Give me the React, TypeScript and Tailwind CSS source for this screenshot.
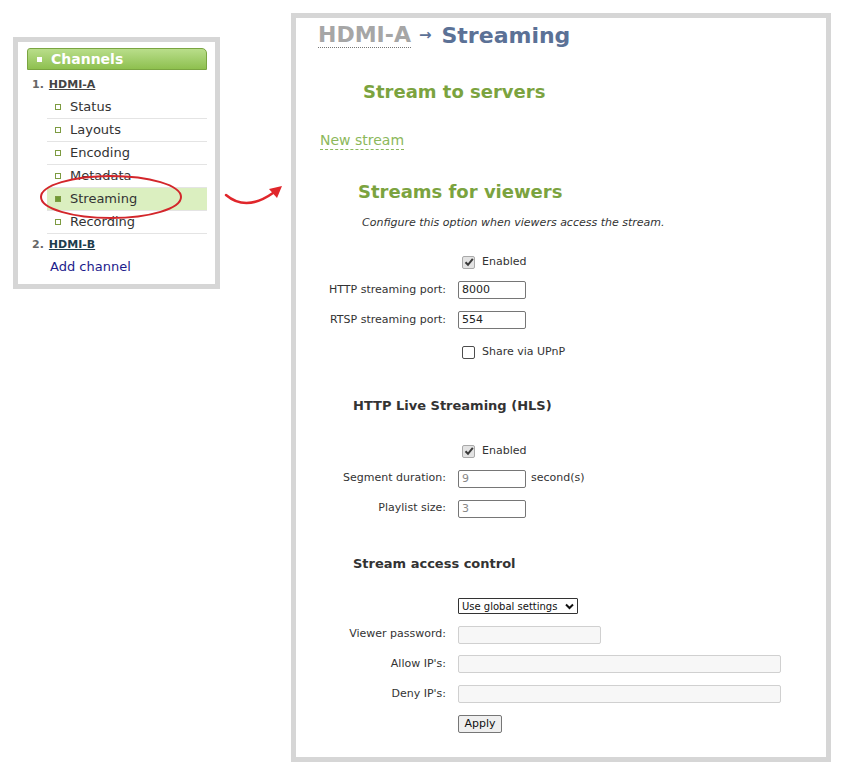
import React from 'react';

const font = { fontFamily: '"DejaVu Sans", Verdana, sans-serif' };

const channelItems = ['Status', 'Layouts', 'Encoding', 'Metadata', 'Streaming', 'Recording'];

const CheckBox: React.FC<{ checked?: boolean }> = ({ checked }) =>
  checked ? (
    <span className="ml-[4px] w-[13px] h-[13px] rounded-[2px] border border-[#a9a9a9] bg-[#e3e3e3] flex items-center justify-center">
      <svg width="10" height="10" viewBox="0 0 10 10">
        <path d="M1.5 5.2 L4 7.8 L8.8 1.8" fill="none" stroke="#3a3a3a" strokeWidth="2" />
      </svg>
    </span>
  ) : (
    <span className="ml-[4px] w-[13px] h-[13px] rounded-[2px] border border-[#4d4d4d] bg-white" />
  );

const Row: React.FC<{ label?: string; h: string; children: React.ReactNode }> = ({ label, h, children }) => (
  <div className={`flex items-center ${h}`}>
    <div className="w-[162px] pr-[12px] text-right text-[11px] text-[#333]">{label}</div>
    <div className="flex items-center">{children}</div>
  </div>
);

const TextBox: React.FC<{ value?: string; muted?: boolean; w: string; disabled?: boolean }> = ({ value, muted, w, disabled }) => (
  <div
    className={`${w} h-[18px] rounded-[2px] border px-[3px] text-[11px] leading-[16px] ${
      disabled ? 'border-[#d0d0d0] bg-[#f7f7f7]' : 'border-[#767676] bg-white'
    } ${muted ? 'text-[#888]' : 'text-[#222]'}`}
  >
    {value}
  </div>
);

export default function App() {
  return (
    <div className="bg-white w-[845px] h-[777px] flex items-start pl-[13px] pt-[13px]" style={font}>
      {/* channel sidebar */}
      <div className="relative mt-[24px] w-[207px] border-[5px] border-[#d6d6d6] bg-white pt-[6px] pl-[9px] pr-[8px] pb-[6px]">
        <div className="h-[22px] flex items-center rounded-tl-[3px] rounded-tr-[5px] border border-[#7aa541] bg-gradient-to-b from-[#b9de8a] to-[#8ec04e] pl-[9px]">
          <span className="w-[5px] h-[5px] bg-white" />
          <span className="ml-[9px] text-[14px] font-bold text-white">Channels</span>
        </div>
        <div className="h-[26px] pt-[4px] flex items-center pl-[5px] text-[11px] font-bold">
          <span className="text-[#666]">1.</span>
          <span className="ml-[5px] text-[#444] underline">HDMI-A</span>
        </div>
        <div className="ml-[20px]">
          {channelItems.map((item) => {
            const active = item === 'Streaming';
            return (
              <div
                key={item}
                className={`h-[23px] flex items-center border-b border-[#e4e4e4] ${active ? 'bg-[#dbefc0]' : ''}`}
              >
                <span
                  className={`ml-[8px] w-[6px] h-[6px] border border-[#7d9b41] ${active ? 'bg-[#6f9a35]' : 'bg-white'}`}
                />
                <span className="ml-[9px] text-[13px] text-[#333]">{item}</span>
              </div>
            );
          })}
        </div>
        <div className="h-[22px] flex items-center pl-[5px] text-[11px] font-bold">
          <span className="text-[#666]">2.</span>
          <span className="ml-[5px] text-[#1d3d4d] underline">HDMI-B</span>
        </div>
        <div className="h-[22px] flex items-center pl-[23px] text-[13px] text-[#1c1c8c]">Add channel</div>
        <svg className="absolute left-0 top-0 overflow-visible pointer-events-none" width="207" height="252">
          <ellipse cx="93" cy="155" rx="70" ry="21" fill="none" stroke="#d3262b" strokeWidth="2" />
        </svg>
      </div>

      {/* pointer arrow */}
      <svg className="mt-[167px]" width="71" height="30" viewBox="0 0 71 30">
        <path d="M6 15 Q 26 32 53 13" fill="none" stroke="#e0262b" strokeWidth="2.5" strokeLinecap="round" />
        <polygon points="62,6 49,9 57,18" fill="#e0262b" />
      </svg>

      {/* streaming page */}
      <div className="w-[540px] h-[749px] border-[5px] border-[#d6d6d6] bg-white">
        <div className="mt-[3px] ml-[22px] h-[28px] flex items-center text-[22px] font-bold">
          <span className="text-[#a6a6a6] border-b border-dotted border-[#777] leading-[24px]">HDMI-A</span>
          <span className="ml-[8px] mr-[10px] text-[15px] text-[#5b7196]">→</span>
          <span className="text-[#5b7196]">Streaming</span>
        </div>

        <div className="mt-[31px] ml-[67px] text-[18px] leading-[24px] font-bold text-[#7ba33f]">Stream to servers</div>

        <div className="mt-[27px] ml-[24px] h-[20px] flex items-center">
          <span className="text-[14px] leading-[17px] text-[#8cb85b] border-b border-dashed border-[#8cb85b]">New stream</span>
        </div>

        <div className="mt-[29px] ml-[62px] text-[18px] leading-[24px] font-bold text-[#7ba33f]">Streams for viewers</div>
        <div className="mt-[11px] ml-[66px] text-[11px] leading-[16px] italic text-[#333]">
          Configure this option when viewers access the stream.
        </div>

        <div className="mt-[17px]">
          <Row h="h-[28px]">
            <CheckBox checked />
            <span className="ml-[7px] text-[11px] text-[#333]">Enabled</span>
          </Row>
          <Row label="HTTP streaming port:" h="h-[28px]">
            <TextBox value="8000" w="w-[68px]" />
          </Row>
          <Row label="RTSP streaming port:" h="h-[32px]">
            <TextBox value="554" w="w-[68px]" />
          </Row>
          <Row h="h-[32px]">
            <CheckBox />
            <span className="ml-[7px] text-[11px] text-[#333]">Share via UPnP</span>
          </Row>
        </div>

        <div className="mt-[28px] ml-[57px] text-[13px] leading-[20px] font-bold text-[#333]">HTTP Live Streaming (HLS)</div>

        <div className="mt-[22px]">
          <Row h="h-[26px]">
            <CheckBox checked />
            <span className="ml-[7px] text-[11px] text-[#333]">Enabled</span>
          </Row>
          <Row label="Segment duration:" h="h-[29px]">
            <TextBox value="9" muted w="w-[68px]" />
            <span className="ml-[5px] text-[11px] text-[#333]">second(s)</span>
          </Row>
          <Row label="Playlist size:" h="h-[31px]">
            <TextBox value="3" muted w="w-[68px]" />
          </Row>
        </div>

        <div className="mt-[30px] ml-[57px] text-[13px] leading-[20px] font-bold text-[#333]">Stream access control</div>

        <div className="mt-[18px]">
          <Row h="h-[28px]">
            <div className="w-[120px] h-[16px] border border-[#333] rounded-[1px] flex items-center justify-between pl-[3px] pr-[3px] text-[10px] whitespace-nowrap text-[#111]">
              <span>Use global settings</span>
              <svg width="9" height="7" viewBox="0 0 9 7">
                <path d="M1 1.5 L4.5 5 L8 1.5" fill="none" stroke="#111" strokeWidth="2" />
              </svg>
            </div>
          </Row>
          <Row label="Viewer password:" h="h-[29px]">
            <TextBox w="w-[143px]" disabled />
          </Row>
          <Row label="Allow IP's:" h="h-[30px]">
            <TextBox w="w-[323px]" disabled />
          </Row>
          <Row label="Deny IP's:" h="h-[30px]">
            <TextBox w="w-[323px]" disabled />
          </Row>
          <Row h="h-[30px]">
            <div className="w-[44px] h-[18px] rounded-[2px] border border-[#767676] bg-[#efefef] flex items-center justify-center text-[11px] text-[#111]">
              Apply
            </div>
          </Row>
        </div>
      </div>
    </div>
  );
}
